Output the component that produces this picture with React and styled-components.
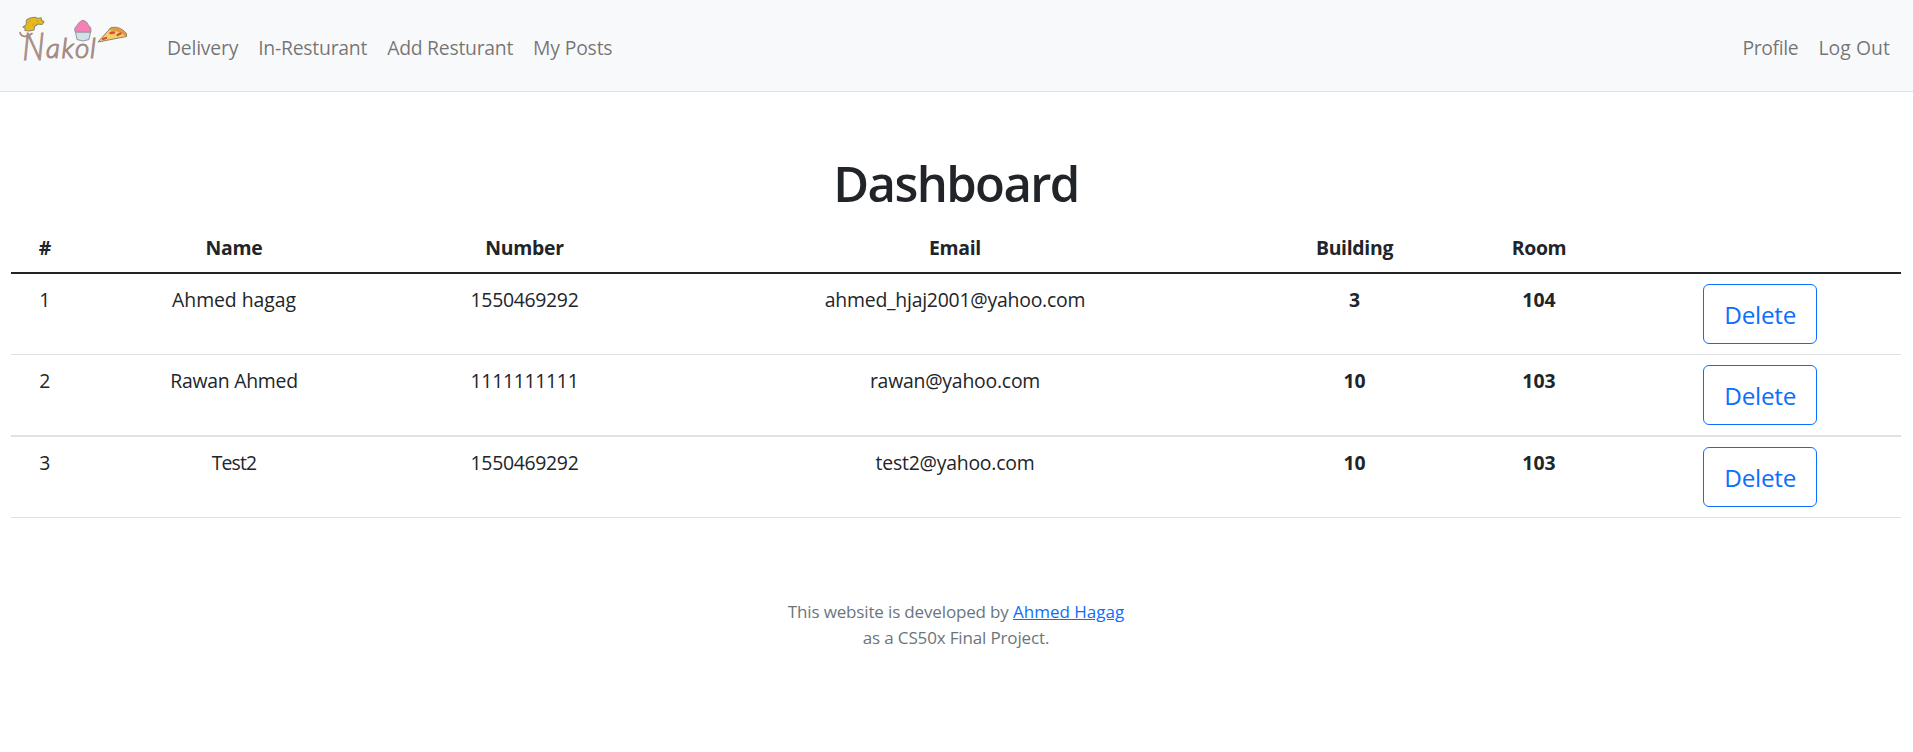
import React from 'react';
import styled, { createGlobalStyle } from 'styled-components';

const GlobalStyle = createGlobalStyle`
  *, *::before, *::after { box-sizing: border-box; }
  body {
    margin: 0;
    background: #fff;
    color: #212529;
    font-family: "Segoe UI", "Open Sans", "Noto Sans", sans-serif;
    font-size: 19.4px;
    font-weight: 400;
    line-height: 30px;
  }
`;

const Navbar = styled.nav`
  display: flex;
  align-items: flex-start;
  height: 92px;
  padding: 0 13px 0 0;
  background: #f8f9fb;
  border-bottom: 1px solid #dee2e6;
`;

const Brand = styled.a`
  display: block;
  width: 157px;
  height: 91px;
`;

const Logo = styled.svg`
  display: block;
  width: 157px;
  height: 91px;
`;

const NavList = styled.div`
  display: flex;
  padding-top: 33px;
  margin-left: ${(p) => (p.$end ? 'auto' : 0)};
`;

const NavLink = styled.a`
  padding: 0 10px;
  color: rgba(0, 0, 0, 0.55);
  letter-spacing: ${(p) => p.$track || 0}px;
  white-space: nowrap;
`;

const Main = styled.main`
  padding: 61px 12px 0 11px;
`;

const Title = styled.h1`
  margin: 0 0 9px;
  font-size: 49px;
  font-weight: 540;
  line-height: 60px;
  letter-spacing: -1.6px;
  text-align: center;
`;

const Table = styled.table`
  width: 1890px;
  table-layout: fixed;
  border-collapse: separate;
  border-spacing: 0;
  text-align: center;
`;

const Col = styled.col`
  width: ${(p) => p.$w}px;
`;

const HeadCell = styled.th`
  height: 52px;
  padding: 11px 10px 9px;
  border-bottom: 2px solid #212529;
  font-weight: 700;
  letter-spacing: -0.3px;
  vertical-align: top;
`;

const Cell = styled.td`
  height: ${(p) => 80 + p.$line}px;
  padding: ${(p) => (p.$action ? '10px' : '11px 10px 9px')};
  border-bottom: ${(p) => p.$line}px solid #dee2e6;
  font-weight: ${(p) => (p.$strong ? 700 : 400)};
  letter-spacing: ${(p) => p.$track || 0}px;
  vertical-align: top;
`;

const DeleteButton = styled.button`
  display: block;
  width: 114px;
  height: 60px;
  margin: 0 auto;
  padding: 1px 0 0;
  background: transparent;
  border: 1px solid #0d6efd;
  border-radius: 6px;
  color: #0d6efd;
  font: inherit;
  font-size: 24.3px;
  line-height: 57px;
  letter-spacing: -0.25px;
`;

const Footer = styled.footer`
  margin-top: 81px;
  color: #6c757d;
  font-size: 17px;
  line-height: 26px;
  letter-spacing: -0.15px;
  text-align: center;
`;

const FooterLink = styled.a`
  color: #0d6efd;
  letter-spacing: 0;
  text-decoration: underline;
`;

const users = [
  { id: 1, name: 'Ahmed hagag', nameTrack: -0.05, number: '1550469292', email: 'ahmed_hjaj2001@yahoo.com', building: 3, room: 104, line: 1 },
  { id: 2, name: 'Rawan Ahmed', nameTrack: -0.25, number: '1111111111', email: 'rawan@yahoo.com', building: 10, room: 103, line: 2 },
  { id: 3, name: 'Test2', nameTrack: -0.9, number: '1550469292', email: 'test2@yahoo.com', building: 10, room: 103, line: 1 },
];

const columns = [67.5, 311, 270, 591, 208, 161, 281.5];

function BrandLogo() {
  return (
    <Logo viewBox="0 0 157 91" aria-label="Nakol">
      <path d="M20 32.5 C21 37 27 38 32 33.5" fill="none" stroke="#a58a83" strokeWidth="1.7" strokeLinecap="round" />
      <text y="57.5" fontFamily="Lato" fontStyle="italic" fontWeight="300" fontSize="28" fill="#cb9788" stroke="#a08780" strokeWidth="1">
        <tspan x="22.500" y="60" fontSize="37" textLength="22" lengthAdjust="spacingAndGlyphs">N</tspan>
        <tspan x="46" y="57.500">a</tspan>
        <tspan x="61.500">k</tspan>
        <tspan x="75">o</tspan>
        <tspan x="90">l</tspan>
      </text>
      <path d="M23 27 L26 25 L26.500 20 L30 18 L35 17.300 L38 18.500 L41 17.700 L41.500 20 L44 22 L42 24.500 L38 24 L34.500 26.500 L34 30 L29 31 L25 30.500 L25 28 Z" fill="#e9bb18" stroke="#8d8a72" strokeWidth="1.100" strokeLinejoin="round" />
      <path d="M28 23 L31 20 M32 26 L34 23 M36 21 L39 21.500" stroke="#c99b19" strokeWidth="0.800" fill="none" />
      <path d="M75.500 32 H90.500 L89 39.500 Q83 42.500 77 39.500 Z" fill="#d3e0e9" stroke="#91999f" strokeWidth="1" />
      <path d="M75.200 32 C74 28.500 75.500 26.500 77.500 25 C78 22.500 80 22.500 82 20.300 C84.500 20.500 88 22.300 88 25 C90.500 26.500 91.500 28.500 90.800 32 Z" fill="#f381b3" stroke="#98909c" strokeWidth="1" />
      <path d="M98 42 L111 27.500 Q120 26 126.500 33.500 L126.500 36.500 Z" fill="#f3ce69" stroke="#8d8368" strokeWidth="1" strokeLinejoin="round" />
      <path d="M111 27.500 Q120 26 126.500 33.500 L126.300 36 Q119 30 110 29.500 Z" fill="#e69a45" stroke="#a97a45" strokeWidth="0.500" />
      <path d="M110.500 33 L114 32.500 M117.500 35 L120.500 33.500 M103 39 L106 38" stroke="#dc4a35" strokeWidth="2.300" strokeLinecap="round" />
    </Logo>
  );
}

export default function App() {
  return (
    <>
      <GlobalStyle />
      <Navbar>
        <Brand><BrandLogo /></Brand>
        <NavList>
          <NavLink $track={-0.22}>Delivery</NavLink>
          <NavLink $track={-0.25}>In-Resturant</NavLink>
          <NavLink $track={-0.27}>Add Resturant</NavLink>
          <NavLink $track={-0.2}>My Posts</NavLink>
        </NavList>
        <NavList $end>
          <NavLink $track={-0.35}>Profile</NavLink>
          <NavLink $track={0.05}>Log Out</NavLink>
        </NavList>
      </Navbar>
      <Main>
        <Title>Dashboard</Title>
        <Table>
          <colgroup>
            {columns.map((w, i) => <Col key={i} $w={w} />)}
          </colgroup>
          <thead>
            <tr>
              {['#', 'Name', 'Number', 'Email', 'Building', 'Room', ''].map((h) => (
                <HeadCell key={h}>{h}</HeadCell>
              ))}
            </tr>
          </thead>
          <tbody>
            {users.map((u) => (
              <tr key={u.id}>
                <Cell $line={u.line}>{u.id}</Cell>
                <Cell $line={u.line} $track={u.nameTrack}>{u.name}</Cell>
                <Cell $line={u.line} $track={-0.3}>{u.number}</Cell>
                <Cell $line={u.line} $track={-0.22}>{u.email}</Cell>
                <Cell $line={u.line} $strong>{u.building}</Cell>
                <Cell $line={u.line} $strong>{u.room}</Cell>
                <Cell $line={u.line} $action><DeleteButton>Delete</DeleteButton></Cell>
              </tr>
            ))}
          </tbody>
        </Table>
        <Footer>
          This website is developed by <FooterLink>Ahmed Hagag</FooterLink>
          <br />
          as a CS50x Final Project.
        </Footer>
      </Main>
    </>
  );
}
